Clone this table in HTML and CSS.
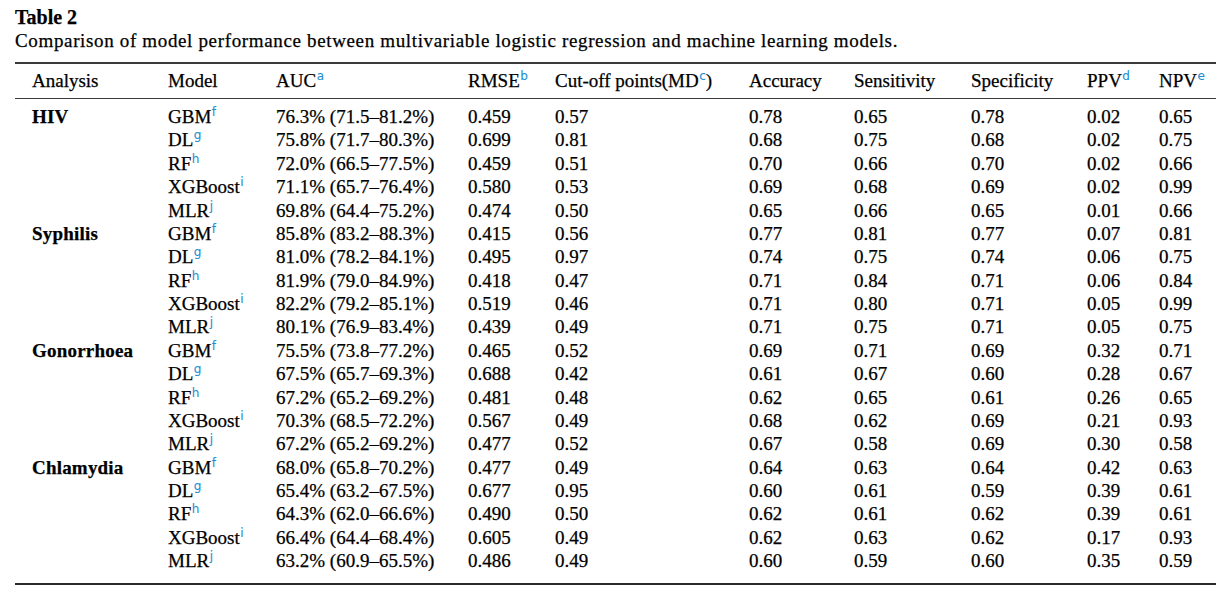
FILE: index.html
```html
<!DOCTYPE html>
<html>
<head>
<meta charset="utf-8">
<link rel="stylesheet" href="styles.css">
</head>
<body>
<div class="page">
  <div class="title">Table 2</div>
  <div class="caption">Comparison of model performance between multivariable logistic regression and machine learning models.</div>
  <table class="data">
    <colgroup>
      <col class="c1"><col class="c2"><col class="c3"><col class="c4"><col class="c5">
      <col class="c6"><col class="c7"><col class="c8"><col class="c9"><col class="c10">
    </colgroup>
    <thead>
      <tr>
        <th>Analysis</th><th>Model</th><th>AUC<sup>a</sup></th><th>RMSE<sup>b</sup></th>
        <th>Cut-off points(MD<sup>c</sup>)</th><th>Accuracy</th><th>Sensitivity</th>
        <th>Specificity</th><th>PPV<sup>d</sup></th><th>NPV<sup>e</sup></th>
      </tr>
    </thead>
    <tbody>
      <tr class="first"><td class="grp" rowspan="5">HIV</td><td>GBM<sup>f</sup></td><td>76.3% (71.5–81.2%)</td><td>0.459</td><td>0.57</td><td>0.78</td><td>0.65</td><td>0.78</td><td>0.02</td><td>0.65</td></tr>
      <tr><td>DL<sup>g</sup></td><td>75.8% (71.7–80.3%)</td><td>0.699</td><td>0.81</td><td>0.68</td><td>0.75</td><td>0.68</td><td>0.02</td><td>0.75</td></tr>
      <tr><td>RF<sup>h</sup></td><td>72.0% (66.5–77.5%)</td><td>0.459</td><td>0.51</td><td>0.70</td><td>0.66</td><td>0.70</td><td>0.02</td><td>0.66</td></tr>
      <tr><td>XGBoost<sup>i</sup></td><td>71.1% (65.7–76.4%)</td><td>0.580</td><td>0.53</td><td>0.69</td><td>0.68</td><td>0.69</td><td>0.02</td><td>0.99</td></tr>
      <tr><td>MLR<sup>j</sup></td><td>69.8% (64.4–75.2%)</td><td>0.474</td><td>0.50</td><td>0.65</td><td>0.66</td><td>0.65</td><td>0.01</td><td>0.66</td></tr>

      <tr><td class="grp" rowspan="5">Syphilis</td><td>GBM<sup>f</sup></td><td>85.8% (83.2–88.3%)</td><td>0.415</td><td>0.56</td><td>0.77</td><td>0.81</td><td>0.77</td><td>0.07</td><td>0.81</td></tr>
      <tr><td>DL<sup>g</sup></td><td>81.0% (78.2–84.1%)</td><td>0.495</td><td>0.97</td><td>0.74</td><td>0.75</td><td>0.74</td><td>0.06</td><td>0.75</td></tr>
      <tr><td>RF<sup>h</sup></td><td>81.9% (79.0–84.9%)</td><td>0.418</td><td>0.47</td><td>0.71</td><td>0.84</td><td>0.71</td><td>0.06</td><td>0.84</td></tr>
      <tr><td>XGBoost<sup>i</sup></td><td>82.2% (79.2–85.1%)</td><td>0.519</td><td>0.46</td><td>0.71</td><td>0.80</td><td>0.71</td><td>0.05</td><td>0.99</td></tr>
      <tr><td>MLR<sup>j</sup></td><td>80.1% (76.9–83.4%)</td><td>0.439</td><td>0.49</td><td>0.71</td><td>0.75</td><td>0.71</td><td>0.05</td><td>0.75</td></tr>

      <tr><td class="grp" rowspan="5">Gonorrhoea</td><td>GBM<sup>f</sup></td><td>75.5% (73.8–77.2%)</td><td>0.465</td><td>0.52</td><td>0.69</td><td>0.71</td><td>0.69</td><td>0.32</td><td>0.71</td></tr>
      <tr><td>DL<sup>g</sup></td><td>67.5% (65.7–69.3%)</td><td>0.688</td><td>0.42</td><td>0.61</td><td>0.67</td><td>0.60</td><td>0.28</td><td>0.67</td></tr>
      <tr><td>RF<sup>h</sup></td><td>67.2% (65.2–69.2%)</td><td>0.481</td><td>0.48</td><td>0.62</td><td>0.65</td><td>0.61</td><td>0.26</td><td>0.65</td></tr>
      <tr><td>XGBoost<sup>i</sup></td><td>70.3% (68.5–72.2%)</td><td>0.567</td><td>0.49</td><td>0.68</td><td>0.62</td><td>0.69</td><td>0.21</td><td>0.93</td></tr>
      <tr><td>MLR<sup>j</sup></td><td>67.2% (65.2–69.2%)</td><td>0.477</td><td>0.52</td><td>0.67</td><td>0.58</td><td>0.69</td><td>0.30</td><td>0.58</td></tr>

      <tr><td class="grp" rowspan="5">Chlamydia</td><td>GBM<sup>f</sup></td><td>68.0% (65.8–70.2%)</td><td>0.477</td><td>0.49</td><td>0.64</td><td>0.63</td><td>0.64</td><td>0.42</td><td>0.63</td></tr>
      <tr><td>DL<sup>g</sup></td><td>65.4% (63.2–67.5%)</td><td>0.677</td><td>0.95</td><td>0.60</td><td>0.61</td><td>0.59</td><td>0.39</td><td>0.61</td></tr>
      <tr><td>RF<sup>h</sup></td><td>64.3% (62.0–66.6%)</td><td>0.490</td><td>0.50</td><td>0.62</td><td>0.61</td><td>0.62</td><td>0.39</td><td>0.61</td></tr>
      <tr><td>XGBoost<sup>i</sup></td><td>66.4% (64.4–68.4%)</td><td>0.605</td><td>0.49</td><td>0.62</td><td>0.63</td><td>0.62</td><td>0.17</td><td>0.93</td></tr>
      <tr class="last"><td>MLR<sup>j</sup></td><td>63.2% (60.9–65.5%)</td><td>0.486</td><td>0.49</td><td>0.60</td><td>0.59</td><td>0.60</td><td>0.35</td><td>0.59</td></tr>
    </tbody>
  </table>
</div>
</body>
</html>
```

FILE: styles.css
```css
html, body {
  margin: 0;
  padding: 0;
  background: #ffffff;
}
.page {
  padding: 6px 13px 0 15px;
  font-family: "Liberation Serif", "Times New Roman", serif;
  color: #000000;
  -webkit-text-stroke: 0.25px #000000;
}
.title {
  font-weight: bold;
  font-size: 20px;
  line-height: 23px;
}
.caption {
  font-size: 19px;
  line-height: 23px;
  letter-spacing: 0.65px;
  margin-bottom: 10px;
}
.data {
  width: 1201px;
  border-collapse: collapse;
  table-layout: fixed;
  font-size: 19px;
  border-top: 2px solid #3a3a3a;
  border-bottom: 2px solid #2a2a2a;
}
.c1 { width: 153px; }
.c2 { width: 108px; }
.c3 { width: 192px; }
.c4 { width: 87px; }
.c5 { width: 194px; }
.c6 { width: 105px; }
.c7 { width: 117px; }
.c8 { width: 116px; }
.c9 { width: 72px; }
.c10 { width: 57px; }
.data th {
  font-weight: normal;
  text-align: left;
  padding: 0;
  height: 34px;
  border-bottom: 1px solid #3a3a3a;
  white-space: nowrap;
}
.data td {
  padding: 0;
  line-height: 23.37px;
  height: 23.37px;
  white-space: nowrap;
  vertical-align: middle;
}
.data th:first-child,
.data td.grp {
  padding-left: 17px;
}
.data td.grp {
  font-weight: bold;
  vertical-align: top;
  letter-spacing: 0.2px;
}
.data tr.first td {
  padding-top: 6px;
}
.data tr.last td {
  padding-bottom: 10px;
}
sup {
  color: #1e8fd2;
  -webkit-text-stroke: 0.1px #1e8fd2;
  font-family: "DejaVu Sans", sans-serif;
  font-size: 12px;
  line-height: 0;
  vertical-align: 7px;
  margin-left: 0.5px;
}
```
